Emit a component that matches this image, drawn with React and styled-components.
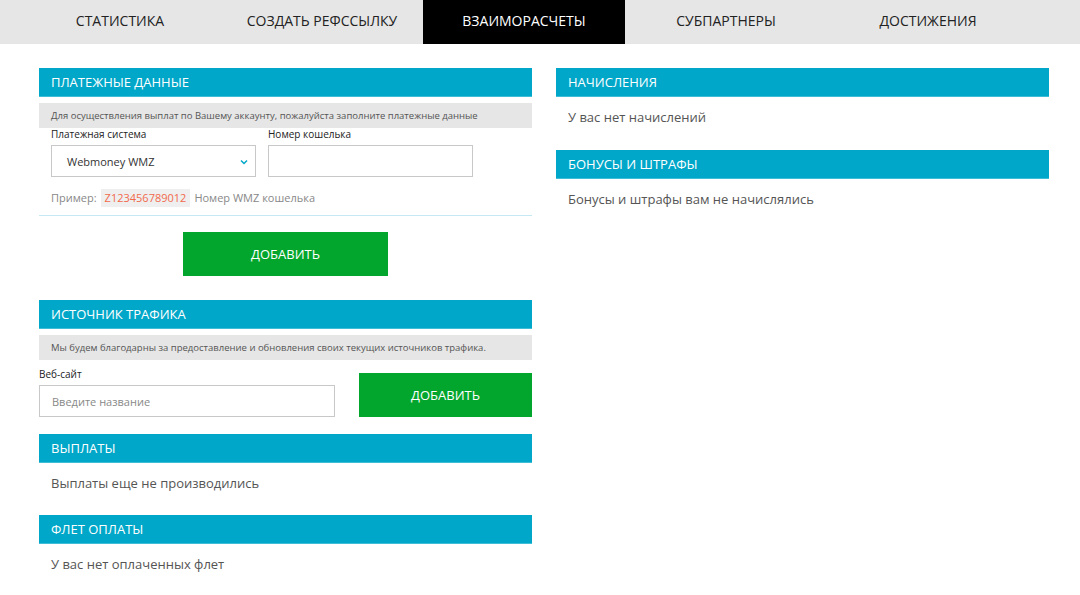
import React from 'react';
import styled, { createGlobalStyle } from 'styled-components';

const GlobalStyle = createGlobalStyle`
  html, body {
    margin: 0;
    padding: 0;
    background: #fff;
    font-family: 'Open Sans', 'Noto Sans', sans-serif;
    color: #333;
  }
  * {
    box-sizing: border-box;
  }
`;

const Nav = styled.nav`
  display: flex;
  height: 44px;
  padding-left: 19px;
  background: #e6e6e6;
`;

const Tab = styled.div`
  width: 202px;
  display: flex;
  align-items: center;
  justify-content: center;
  padding-bottom: 3px;
  font-size: 14px;
  text-transform: uppercase;
  background: ${({ active }) => (active ? '#000' : 'transparent')};
  color: ${({ active }) => (active ? '#fff' : '#222')};
`;

const Content = styled.main`
  display: grid;
  grid-template-columns: 493px 493px;
  column-gap: 24px;
  padding: 24px 0 0 39px;
  align-items: start;
`;

const Column = styled.div`
  display: flex;
  flex-direction: column;
`;

const Header = styled.div`
  height: 29px;
  padding-left: 12px;
  display: flex;
  align-items: center;
  background: #00a7c9;
  border-bottom: 1px solid #3fbdd7;
  color: #fff;
  font-size: 13px;
  text-transform: uppercase;
`;

const InfoBar = styled.div`
  margin-top: 6px;
  height: 25px;
  padding-left: 12px;
  display: flex;
  align-items: center;
  background: #e6e6e6;
  color: #555;
  font-size: 9.5px;
`;

const FieldsRow = styled.div`
  display: flex;
  gap: 12px;
  padding: 0 12px;
`;

const Field = styled.div`
  display: flex;
  flex-direction: column;
  width: ${({ width }) => width || 'auto'};
`;

const Label = styled.label`
  font-size: 10px;
  line-height: 13px;
  color: #222;
  margin-bottom: 4px;
`;

const InputBox = styled.div`
  position: relative;
  height: 32px;
  border: 1px solid #c8c8c8;
  display: flex;
  align-items: center;
  padding-left: ${({ pad }) => pad || '12px'};
  font-size: 11px;
  color: ${({ placeholder }) => (placeholder ? '#888' : '#333')};
  background: #fff;
`;

const Chevron = styled.svg`
  position: absolute;
  right: 7px;
  top: 13px;
`;

const ExampleRow = styled.div`
  margin-top: 12px;
  padding-left: 12px;
  line-height: 18px;
  font-size: 11px;
  color: #888;
  display: flex;
  align-items: center;
  gap: 4px;
`;

const Code = styled.span`
  background: #efefef;
  color: #f26a4c;
  padding: 0 4px;
`;

const Divider = styled.div`
  margin-top: 8px;
  height: 1px;
  background: #c5e9f2;
`;

const GreenButton = styled.button`
  width: ${({ width }) => width};
  height: 44px;
  border: none;
  background: #03a62c;
  color: #fff;
  font-family: inherit;
  font-size: 13px;
  text-transform: uppercase;
  align-self: ${({ center }) => (center ? 'center' : 'auto')};
  margin-top: ${({ top }) => top || '0'};
  flex-shrink: 0;
`;

const TrafficRow = styled.div`
  display: flex;
  align-items: flex-end;
  gap: 24px;
  margin-top: 8px;
`;

const Section = styled.section`
  display: flex;
  flex-direction: column;
  margin-bottom: ${({ gap }) => gap || '23px'};
`;

const Note = styled.div`
  padding: 10px 12px 0;
  line-height: 20px;
  font-size: 13px;
  color: #555;
`;

const tabs = ['Статистика', 'Создать рефссылку', 'Взаиморасчеты', 'Субпартнеры', 'Достижения'];

const App = () => (
  <>
    <GlobalStyle />
    <Nav>
      {tabs.map((t, i) => (
        <Tab key={t} active={i === 2}>
          {t}
        </Tab>
      ))}
    </Nav>
    <Content>
      <Column>
        <Section gap="24px">
          <Header>Платежные данные</Header>
          <InfoBar>Для осуществления выплат по Вашему аккаунту, пожалуйста заполните платежные данные</InfoBar>
          <FieldsRow>
            <Field width="205px">
              <Label>Платежная система</Label>
              <InputBox pad="15px">
                Webmoney WMZ
                <Chevron width="8" height="6" viewBox="0 0 8 6">
                  <polyline points="1,1.5 4,4.5 7,1.5" fill="none" stroke="#00a7c9" strokeWidth="1.5" />
                </Chevron>
              </InputBox>
            </Field>
            <Field width="205px">
              <Label>Номер кошелька</Label>
              <InputBox />
            </Field>
          </FieldsRow>
          <ExampleRow>
            Пример: <Code>Z123456789012</Code> Номер WMZ кошелька
          </ExampleRow>
          <Divider />
          <GreenButton width="205px" center top="16px">
            Добавить
          </GreenButton>
        </Section>

        <Section gap="17px">
          <Header>Источник трафика</Header>
          <InfoBar>Мы будем благодарны за предоставление и обновления своих текущих источников трафика.</InfoBar>
          <TrafficRow>
            <Field width="296px">
              <Label>Веб-сайт</Label>
              <InputBox placeholder>Введите название</InputBox>
            </Field>
            <GreenButton width="173px">Добавить</GreenButton>
          </TrafficRow>
        </Section>

        <Section gap="22px">
          <Header>Выплаты</Header>
          <Note>Выплаты еще не производились</Note>
        </Section>

        <Section>
          <Header>Флет оплаты</Header>
          <Note>У вас нет оплаченных флет</Note>
        </Section>
      </Column>

      <Column>
        <Section>
          <Header>Начисления</Header>
          <Note>У вас нет начислений</Note>
        </Section>
        <Section>
          <Header>Бонусы и штрафы</Header>
          <Note>Бонусы и штрафы вам не начислялись</Note>
        </Section>
      </Column>
    </Content>
  </>
);

export default App;
